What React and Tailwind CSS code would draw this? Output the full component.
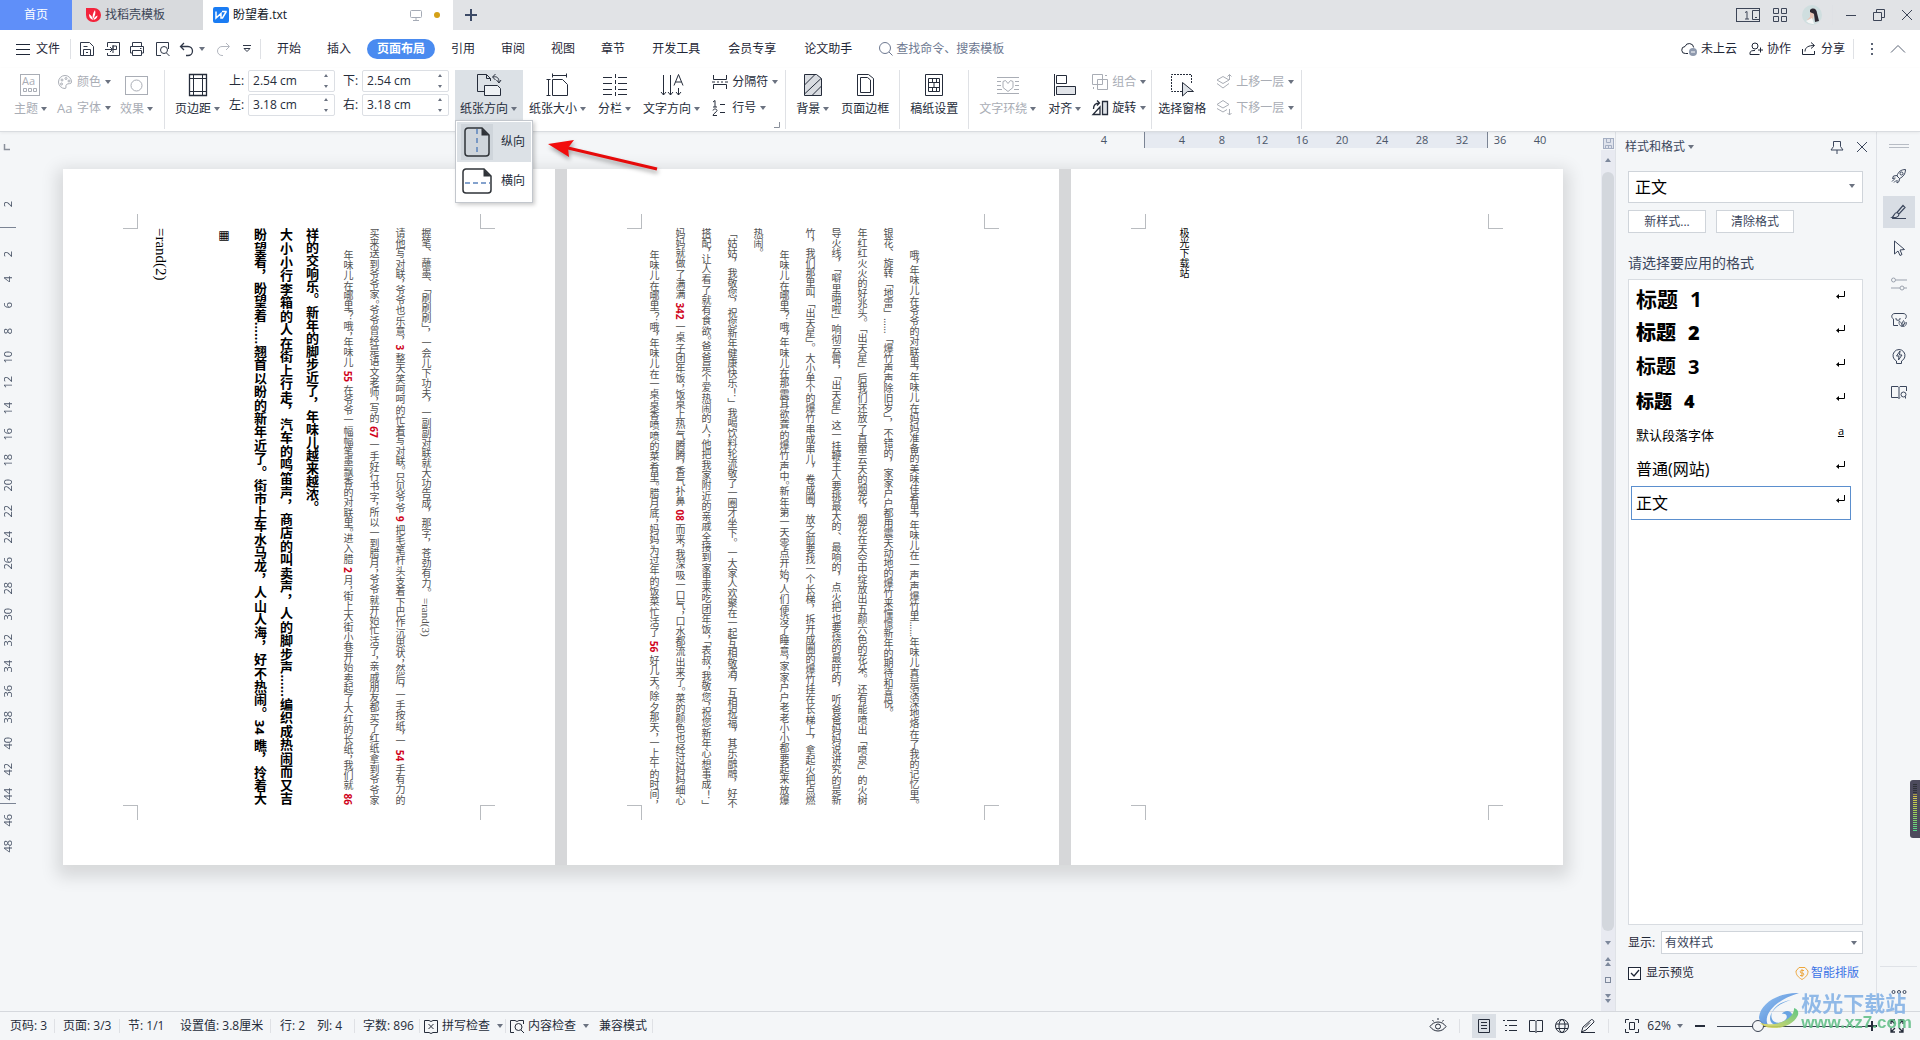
import React, { useState } from 'react'
import clsx from 'clsx'

/* ---------- small helpers ---------- */

function Svg({ w = 16, h = w, className, children }) {
  return (
    <svg
      width={w}
      height={h}
      viewBox={`0 0 ${w} ${h}`}
      fill="none"
      stroke="currentColor"
      strokeWidth="1"
      className={clsx('shrink-0 overflow-visible', className)}
      aria-hidden="true"
    >
      {children}
    </svg>
  )
}

function Caret({ className }) {
  return (
    <Svg w={6} h={4} className={clsx('text-[#6b7280]', className)}>
      <path d="M0 0h6L3 4z" fill="currentColor" stroke="none" />
    </Svg>
  )
}

function Divider({ className }) {
  return <span className={clsx('w-px shrink-0 bg-[#dfe1e5]', className)} />
}

/* ---------- title bar ---------- */

function TitleBar() {
  return (
    <header className="flex h-[30px] shrink-0 items-stretch bg-[#e1e3e6] text-[#3c4557]">
      <button className="w-[72px] bg-[#5f8ff9] text-white">首页</button>
      <button className="flex w-[131px] items-center gap-1 bg-[#d8dadd] pl-[13px]">
        <Svg w={16}>
          <path d="M1 1h8a7 7 0 0 1 0 14H8a7 7 0 0 1-7-7z" fill="#f3243c" stroke="none" />
          <path d="M8 13c-3-1-4-3-4-6 2 1 3.500 3 4 6zM8 12c-1-3 0-6 2-9 1 3 0 6-2 9zM8.500 13c0-2 2-4 4-4.500 0 2-1.500 4-4 4.500z" fill="#fff" stroke="none" />
        </Svg>
        找稻壳模板
      </button>
      <div className="flex w-[250px] items-center gap-1 bg-white pl-[10px] pr-[13px] text-[#111827]">
        <Svg w={16}>
          <rect width="16" height="16" rx="2" fill="#1a7cf3" stroke="none" />
          <path d="M3 4.500V11l5-4.500V11h1.500L13 5V4.500H9" stroke="#fff" strokeWidth="1.500" />
        </Svg>
        <span className="grow">盼望着.txt</span>
        <Svg w={12} className="mr-2 text-[#a5abb6]">
          <rect x=".5" y="1.500" width="11" height="7" rx="1" />
          <path d="M6 8.500v3M3 11.500h6" />
        </Svg>
        <span className="size-[6px] rounded-full bg-[#d4a017]" />
      </div>
      <button className="px-3" aria-label="新建">
        <Svg w={12} className="text-[#3c4a66]">
          <path d="M6 0v12M0 6h12" strokeWidth="2" />
        </Svg>
      </button>
      <div className="ml-auto flex items-center pr-[7px]">
        <Svg w={24} h={14}>
          <rect x=".5" y=".5" width="23" height="13" />
          <path d="M23 2.500h-6.500v9H23M19 9.500h2M9 4.500l2-1v7.500M9 11h4" />
        </Svg>
        <Svg w={14} className="ml-[13px]">
          <path d="M.5.5h5v5h-5zM8.500.5h5v5h-5zM.5 8.500h5v5h-5zM8.500 8.500h5v5h-5z" />
        </Svg>
        <Svg w={20} className="ml-[15px]">
          <circle cx="10" cy="10" r="10" fill="#cfdedf" stroke="none" />
          <path d="M8 5c3-3 7-1 7 3l2 8-4 1-1-8-4-1z" fill="#2d2730" stroke="none" />
          <path d="M8 7l4 2-1 5-5 3-1-2 3-3z" fill="#e7c3b4" stroke="none" />
          <path d="M4 16l6-3 2 6a9 9 0 0 1-8-3z" fill="#f4f6f6" stroke="none" />
        </Svg>
        <Divider className="ml-[10px] h-5 bg-[#c6cad0]" />
        <button className="ml-3 flex size-3 items-center" aria-label="最小化">
          <Svg w={12}><path d="M1 6.500h10" /></Svg>
        </button>
        <button className="ml-4" aria-label="还原">
          <Svg w={12}><path d="M.5 3.500h8v8h-8zM3.500 3V.5h8v8H9" /></Svg>
        </button>
        <button className="ml-4" aria-label="关闭">
          <Svg w={12}><path d="M1 1l10 10M11 1L1 11" /></Svg>
        </button>
      </div>
    </header>
  )
}

/* ---------- menu row ---------- */

const TABS = ['开始', '插入', '页面布局', '引用', '审阅', '视图', '章节', '开发工具', '会员专享', '论文助手']

function MenuRow() {
  const [active, setActive] = useState('页面布局')
  return (
    <nav className="flex h-[38px] shrink-0 items-center bg-white text-[#1f2737]">
      <button className="ml-4 flex items-center gap-[6px] text-[#1f2737]">
        <Svg w={14}><path d="M0 2.500h14M0 7.500h14M0 12.500h14" /></Svg>
        文件
      </button>
      <Divider className="ml-[10px] h-5" />
      <div className="flex items-center pl-2 text-[#303848]">
        <button aria-label="保存">
          <Svg w={16}><path d="M1.500 1.500h9l4 4v9h-13zM4.500 14V8.500h7V14M4.500 5.500h4M7 11.500h2" /></Svg>
        </button>
        <button className="ml-[10px]" aria-label="输出为PDF">
          <Svg w={16}><path d="M2.500 6V1.500h12v13h-12V12M0 8.500h7M5 6l2.500 2.500L5 11M8 5h3.500v3.500H8zM8 4v8" /></Svg>
        </button>
        <button className="ml-2" aria-label="打印">
          <Svg w={16}><path d="M3.500 5V1.500h9V5M3.500 12h-2V5.500h13V12h-2M3.500 9.500h9v5h-9zM11 7.500h1.500" /></Svg>
        </button>
        <button className="ml-[10px]" aria-label="打印预览">
          <Svg w={16}><path d="M6 14.500H1.500v-13h12V8M14.500 15l-3-3" /><circle cx="9" cy="9" r="3.500" /></Svg>
        </button>
        <button className="ml-2 flex items-center gap-1" aria-label="撤销">
          <Svg w={16}><path d="M5 2L1.500 5.500 5 9M2 5.500h7a4.500 4.500 0 0 1 0 9H7" strokeWidth="1.300" /></Svg>
          <Caret />
        </button>
        <button className="ml-[10px] text-[#b3b7bf]" aria-label="恢复">
          <Svg w={16}><path d="M11 2l3.500 3.500L11 9M14 5.500H7a4.500 4.500 0 0 0 0 9h1" /></Svg>
        </button>
        <button className="ml-3" aria-label="更多">
          <Svg w={8}><path d="M0 .5h8M1 3.500h6L4 6.500z" /></Svg>
        </button>
      </div>
      <Divider className="ml-[9px] mr-[3px] h-5" />
      {TABS.map((tab) => (
        <button
          key={tab}
          onClick={() => setActive(tab)}
          className={clsx(
            tab === active
              ? 'mx-[3px] h-5 rounded-full bg-[#4a8bf0] px-[10px] font-bold text-white'
              : tab.length > 2
                ? 'px-[14px]'
                : 'px-[13px]',
          )}
        >
          {tab}
        </button>
      ))}
      <label className="ml-3 flex items-center gap-[2px] text-[#6d7890]">
        <Svg w={16}><circle cx="7" cy="7" r="5.500" /><path d="M11 11l3.500 3.500" /></Svg>
        <input
          type="text"
          aria-label="查找命令、搜索模板"
          placeholder="查找命令、搜索模板"
          className="w-[120px] outline-none placeholder:text-[#6d7890]"
        />
      </label>
      <div className="ml-auto flex items-center pr-[14px]">
        <button className="flex items-center gap-1">
          <Svg w={16}>
            <path d="M7 12.500H4.500a3.500 3.500 0 0 1-.5-7 4.500 4.500 0 0 1 8.700 1" />
            <circle cx="12" cy="11" r="4" fill="#8e99ad" stroke="none" />
            <path d="M10 11h4" stroke="#fff" />
          </Svg>
          未上云
        </button>
        <button className="ml-3 flex items-center gap-1">
          <Svg w={14}>
            <circle cx="6" cy="4" r="3" />
            <path d="M1 12.500v-1.500C1 9 3 8.500 6 8.500M1 12.500h9.500M11.500 5.500v5M9 8h5" />
          </Svg>
          协作
        </button>
        <button className="ml-[10px] flex items-center gap-1">
          <Svg w={16}>
            <path d="M1.500 8v5.500h12V10M4 10.500C4 6 8 4.500 13 4.500M10 1.500l3.500 3-3.500 3" />
          </Svg>
          分享
        </button>
        <Divider className="ml-2 h-5" />
        <button className="ml-4 text-[#5b6475]" aria-label="更多选项">
          <Svg w={4} h={14}><path d="M1 1h2v2H1zM1 6h2v2H1zM1 11h2v2H1z" fill="currentColor" stroke="none" /></Svg>
        </button>
        <button className="ml-4 text-[#5b6475]" aria-label="折叠功能区">
          <Svg w={16}><path d="M1 11.500l7-7 7 7" /></Svg>
        </button>
      </div>
    </nav>
  )
}

/* ---------- ribbon ---------- */

function BigButton({ icon, label, caret, disabled, active }) {
  return (
    <button
      disabled={disabled}
      className={clsx(
        'flex h-[50px] shrink-0 flex-col items-center gap-1 px-[5px] pt-[3px]',
        active && 'bg-[#dce1e6]',
        disabled && 'text-[#a9adb5]',
      )}
    >
      <Svg w={24}>{icon}</Svg>
      <span className="flex items-center gap-[3px] whitespace-nowrap leading-4">
        {label}
        {caret && <Caret className="mr-px" />}
      </span>
    </button>
  )
}

function SmallButton({ icon, label, disabled }) {
  return (
    <button
      disabled={disabled}
      className={clsx('flex h-[26px] items-center gap-1 whitespace-nowrap', disabled && 'text-[#a9adb5]')}
    >
      <Svg w={16}>{icon}</Svg>
      {label}
      <Caret />
    </button>
  )
}

function MarginField({ id, label, value }) {
  return (
    <div className="flex h-[22px] items-center">
      <label htmlFor={id} className="w-[19px]">{label}:</label>
      <div className="flex h-[22px] w-[87px] items-center rounded-[2px] border border-[#dcdfe4] bg-white pr-[5px]">
        <input id={id} defaultValue={value} className="w-full min-w-0 grow pl-1 outline-none" />
        <Svg w={6} h={16} className="text-[#6b7280]">
          <path d="M1 4l2-3 2 3zM1 12l2 3 2-3z" fill="currentColor" stroke="none" />
        </Svg>
      </div>
    </div>
  )
}

function OrientationMenu() {
  return (
    <div className="absolute left-0 top-[50px] z-20 flex w-[78px] flex-col gap-px border border-[#c3c7cd] bg-white p-px pb-[3px] shadow-[2px_2px_4px_rgba(0,0,0,0.2)]">
      <button className="flex h-10 items-center bg-[#dce1e6] pl-1">
        <span className="flex h-9 w-8 items-center justify-center bg-[#cfd5db]">
          <Svg w={26} h={30}>
            <path d="M4 1h14l7 7v18a3 3 0 0 1-3 3H4a3 3 0 0 1-3-3V4a3 3 0 0 1 3-3z" stroke="#2f3338" strokeWidth="1.500" />
            <path d="M17.500 1v7.500H25z" fill="#2f3338" stroke="none" />
            <path d="M13 2v27" stroke="#5c84bd" strokeWidth="1.500" strokeDasharray="5 4" />
          </Svg>
        </span>
        <span className="ml-2">纵向</span>
      </button>
      <button className="flex h-9 items-center pl-1">
        <span className="flex w-8 items-center justify-center">
          <Svg w={30} h={26}>
            <path d="M4 1h18l7 7v14a3 3 0 0 1-3 3H4a3 3 0 0 1-3-3V4a3 3 0 0 1 3-3z" stroke="#2f3338" strokeWidth="1.500" />
            <path d="M21.500 1v7.500H29z" fill="#2f3338" stroke="none" />
            <path d="M3 15h25" stroke="#5c84bd" strokeWidth="1.500" strokeDasharray="5 3" />
          </Svg>
        </span>
        <span className="ml-2">横向</span>
      </button>
    </div>
  )
}

function Ribbon() {
  const sep = 'mx-1 mb-[2px]'
  return (
    <section className="relative z-10 flex h-16 shrink-0 gap-px border-b border-[#d9dce0] bg-white pl-[9px] pt-[2px] text-[#252c3a] shadow-[0_1px_3px_rgba(0,0,0,0.06)]">
      <BigButton
        disabled
        caret
        label="主题"
        icon={
          <>
            <rect x="1.500" y="1.500" width="19" height="21" />
            <text x="3" y="12" fontSize="11" fill="currentColor" stroke="none">Aa</text>
            <path d="M4.500 15.500h3v3h-3zM9.500 15.500h3v3h-3zM14.500 15.500h3v3h-3z" />
          </>
        }
      />
      <div className="-mt-px ml-[3px]">
        <SmallButton
          disabled
          label="颜色"
          icon={
            <>
              <path d="M8 1.500a6.500 6.500 0 1 0 0 13c2 0 0-2.500 1.500-4s5 0 5-2.500a6.500 6.500 0 0 0-6.500-6.500z" />
              <circle cx="5" cy="6" r="1" /><circle cx="9" cy="4.500" r="1" /><circle cx="4.500" cy="10" r="1" /><circle cx="12" cy="7" r="1" />
            </>
          }
        />
        <SmallButton
          disabled
          label="字体"
          icon={<text x="0" y="13" fontSize="13" fill="currentColor" stroke="none">Aa</text>}
        />
      </div>
      <div className="ml-[3px]">
        <BigButton
          disabled
          caret
          label="效果"
          icon={
            <>
              <rect x=".5" y="3.500" width="22" height="18" />
              <circle cx="11.500" cy="12.500" r="5.500" />
            </>
          }
        />
      </div>
      <Divider className={sep} />
      <BigButton
        caret
        label="页边距"
        icon={
          <>
            <path d="M3.500 1.500h17v21h-17z" strokeWidth="1.300" />
            <path d="M7.500 1v22M16.500 1v22M3 5.500h18M3 18.500h18" />
          </>
        }
      />
      <div className="ml-[2px] flex flex-col gap-[2px]">
        <MarginField id="m-top" label="上" value="2.54 cm" />
        <MarginField id="m-left" label="左" value="3.18 cm" />
      </div>
      <div className="ml-[7px] mr-[5px] flex flex-col gap-[2px]">
        <MarginField id="m-bottom" label="下" value="2.54 cm" />
        <MarginField id="m-right" label="右" value="3.18 cm" />
      </div>
      <div className="relative">
        <BigButton
          active
          caret
          label="纸张方向"
          icon={
            <>
              <path d="M7 18.500H.5v-17h9l4 4V8M9.500 1.500v4h4" />
              <path d="M7.500 12.500h13l3 3v7h-16z" fill="#eef1f4" />
              <path d="M16 4c4-1 6 1 6 5M18.500 1L15.500 4l3 3M19.500 7l2.500 3 2-3" />
            </>
          }
        />
        <OrientationMenu />
      </div>
      <BigButton
        caret
        label="纸张大小"
        icon={<path d="M6.500 6.500h10l5 5v11h-15zM6 2.500h15M6.500.5v4M20.500.5v4M2.500 7v15M.5 6.500h4M.5 22.500h4" />}
      />
      <BigButton
        caret
        label="分栏"
        icon={
          <>
            <path d="M0 4.500h9M0 10.500h9M0 16.500h9M0 21.500h9M15 4.500h9M15 10.500h9M15 16.500h9M15 21.500h9" />
            <path d="M12.500 1v22" strokeDasharray="4 2" />
          </>
        }
      />
      <BigButton
        caret
        label="文字方向"
        icon={<path d="M3.500 2v20M1 19l2.500 3L6 19M10.500 2v20M8 19l2.500 3 2.500-3M18.500 15v7M16 19l2.500 3 2.500-3M14 12.500l4.500-11 4.500 11M15.500 9h6" />}
      />
      <div className="-mt-px ml-[5px]">
        <SmallButton label="分隔符" icon={<path d="M1.500 1v4.500h13V1M1.500 15v-4.500h13V15M0 8h3M5 8h2M9 8h2M13 8h3" />} />
        <SmallButton
          label="行号"
          icon={
            <path d="M1 2l2-1.500V7M1 7h4M1 10.500c0-2 4-2 4 0 0 1.500-4 3-4 5h4M8 4.500h5M8 12.500h5" />
          }
        />
      </div>
      <Svg w={6} className="-ml-[5px] mt-[52px] text-[#8a909b]"><path d="M0 5.500h5.500V0" /></Svg>
      <Divider className={sep} />
      <BigButton
        caret
        label="背景"
        icon={
          <>
            <path d="M3.500 1.500h12l5 4v17h-17z" fill="#d9dce1" />
            <path d="M3.500 12l10-10M3.500 21L20 5.500M11 22.500l9.500-9.500" />
          </>
        }
      />
      <BigButton label="页面边框" icon={<path d="M4.500 1.500h11l5 4v17h-16zM7.500 4.500h7l3 2.500v12.500h-10z" />} />
      <Divider className={sep} />
      <BigButton
        label="稿纸设置"
        icon={<path d="M3.500 1.500h17v21h-17zM6.500 5.500h11v13h-11zM6.500 9.500h11M6.500 14.500h11M10.500 5.500v4M14.500 5.500v4M10.500 14.500v4M14.500 14.500v4M12 9.500v5" />}
      />
      <Divider className={sep} />
      <BigButton
        disabled
        caret
        label="文字环绕"
        icon={<path d="M1 4.500h22M1 20.500h22M1 8.500h4M1 12.500h4M1 16.500h5M19 8.500h4M19 12.500h4M18 16.500h5M12 18.500l-5-4v-6l2.500-1 2.500 3 2.500-3 2.500 1v6z" />}
      />
      <BigButton
        caret
        label="对齐"
        icon={
          <>
            <path d="M1.500 1v22M3.500 2.500h10v8h-10z" />
            <path d="M3.500 13.500h19v8h-19z" fill="#e1e4e9" />
          </>
        }
      />
      <div className="-mt-px ml-1">
        <SmallButton
          disabled
          label="组合"
          icon={<path d="M.5.5h10v10H.5zM5.500 5.500h10v10h-10zM13 1.500h2M1.500 13v2" />}
        />
        <SmallButton
          label="旋转"
          icon={
            <>
              <path d="M10.500 1.500h5v13h-5z" fill="#dfe3e8" strokeWidth="1.300" />
              <path d="M8 7L1 14.500h7zM1.500 9c0-4 2-6 6-6M5 .5L7.500 3 5 5.500" strokeWidth="1.300" />
            </>
          }
        />
      </div>
      <Divider className="mb-[2px] ml-1" />
      <BigButton
        label="选择窗格"
        icon={
          <>
            <path d="M12 18.500H1.500v-17h20V10" strokeDasharray="2 1" />
            <path d="M12.500 9.500l11 9h-6l-5 4.500z" fill="#dfe3e8" />
          </>
        }
      />
      <div className="-mt-px ml-1">
        <SmallButton
          disabled
          label="上移一层"
          icon={<path d="M7 2.500l-6 3.500 6 3.500 6-3.500zM1 9.500L7 14l6-4.500M13.500 6V.5M11.500 2.500l2-2 2 2" />}
        />
        <SmallButton
          disabled
          label="下移一层"
          icon={<path d="M7 .5L1 4.500 7 8l6-3.500zM1 8.500L7 12l4-2.500M13.500 9v6M11.500 13l2 2 2-2" />}
        />
      </div>
      <Divider className="mb-[2px] ml-[6px]" />
    </section>
  )
}

/* ---------- document ---------- */

const Red = ({ children }) => <b className="font-bold text-[#d0021b]"> {children} </b>

// kind: bold | thin; full lines are justified to the text frame
function Line({ kind = 'thin', full, indent, tight, children }) {
  return (
    <p
      className={clsx(
        'h-[577px] whitespace-nowrap leading-[26px]',
        kind === 'bold' ? 'text-[13px] font-bold text-black' : 'text-[10px] text-[#505050]',
        full && '[text-align-last:justify]',
        indent && 'pt-[22px]',
        tight && '[font-feature-settings:"vhal"]',
      )}
    >
      {children}
    </p>
  )
}

function Page({ children }) {
  const mark = 'absolute size-[15px] border-[#b9bcc0]'
  return (
    <article className="relative h-[696px] w-[492px] shrink-0 bg-white">
      <span className={clsx(mark, 'left-[60px] top-[45px] border-b border-r')} />
      <span className={clsx(mark, 'right-[60px] top-[45px] border-b border-l')} />
      <span className={clsx(mark, 'bottom-[45px] left-[60px] border-r border-t')} />
      <span className={clsx(mark, 'bottom-[45px] right-[60px] border-l border-t')} />
      <div className="h-full pt-[59px] [writing-mode:vertical-lr]">{children}</div>
    </article>
  )
}

function PageOne() {
  return (
    <Page>
      <p className="ml-[85px] font-['Liberation_Serif'] text-[15px] leading-[26px] text-black">=rand(2)</p>
      <p className="ml-[37px] font-['DejaVu_Sans'] text-[12px] leading-[26px] text-black">▦</p>
      <div className="ml-[10px]">
        <Line kind="bold" full>盼望着，盼望着……翘首以盼的新年近了。街市上车水马龙，人山人海，好不热闹。34 瞧，拎着大</Line>
        <Line kind="bold" full>大小小行李箱的人在街上行走，汽车的鸣笛声，商店的叫卖声，人的脚步声……编织成热闹而又吉</Line>
        <Line kind="bold">祥的交响乐。新年的脚步近了，年味儿越来越浓。</Line>
      </div>
      <div className="ml-[10px]">
        <Line full indent tight>
          年味儿在哪里？哦，年味儿<Red>55</Red>在爷爷一幅幅笔墨飘香的对联里。进入腊<Red>2</Red>月，街上大街小巷开始卖起了大红的长纸，我们就<Red>86</Red>
        </Line>
        <Line full tight>
          买来送到爷爷家。爷爷曾经是语文老师，写的<Red>67</Red>一手好行书字，所以一到腊月，爷爷就开始忙活了，亲戚朋友都买了红纸拿到爷爷家
        </Line>
        <Line full tight>
          请他写对联，爷爷也乐意，<Red>3</Red>整天笑呵呵的忙着写对联。只见爷爷<Red>9</Red>把毛笔杆头支着下巴作沉思状，然后，一手按纸，一<Red>54</Red>手有力的
        </Line>
        <Line>
          握笔、蘸墨、「刷刷刷」，一会儿下功夫，一副副对联就大功告成，那字，苍劲有力。<span className="font-['Liberation_Serif'] text-[11px]">=rand(3)</span>
        </Line>
      </div>
    </Page>
  )
}

function PageTwo() {
  return (
    <Page>
      <div className="ml-[74px]">
        <Line full indent tight>年味儿在哪里？哦，年味儿在一桌桌香喷喷的菜肴里。腊月底，妈妈为过年的饭菜忙活了<Red>56</Red>好几天。除夕那天，一上午的时间，</Line>
        <Line full tight>妈妈就做了满满<Red>342</Red>一桌子团年饭，饭桌上热气腾腾，香气扑鼻<Red>08</Red>而来，我深吸一口气，口水都流出来了。菜的颜色也经过妈妈细心</Line>
        <Line full tight>搭配，让人看了就有食欲。爸爸是个爱热闹的人，他把我家附近的亲戚全接到家里来吃团年饭，「表叔，我敬您，祝您新年心想事成！」</Line>
        <Line full>「姑姑，我敬您，祝您新年健康快乐！」我喝饮料轮流敬了一圈才坐下。一大家人欢聚在一起互相敬酒，互相祝福，其乐融融，好不</Line>
        <Line>热闹。</Line>
        <Line full indent tight>年味儿在哪里？哦，年味儿在那震耳欲聋的爆竹声中。新年第一天零点开始，人们便没了睡意，家家户户老老小小都要起来放爆</Line>
        <Line full>竹，我们那里叫「出天星」。大小单个的爆竹串成串儿，卷成圈，放之前要找一个长梯，拆开成圈的爆竹挂在长梯上，拿起火把点燃</Line>
        <Line full>导火线，「噼里啪啦」响彻云霄，「出天星」这一挂鞭主人要挑最大的、最响的，点火把也要烧的最旺的，听爸爸妈妈说讲究的是新</Line>
        <Line full>年红红火火的好兆头。「出天星」后我们还放了直窜云天的烟花，烟花在天空中绽放出五颜六色的花朵。还有能喷出「喷泉」的火树</Line>
        <Line>银花、旋转「地雷」……「爆竹声声除旧岁」，不错的，家家户户都用震天动地的爆竹来憧憬新年的期待和喜悦。</Line>
        <Line full indent tight>哦，年味儿在爷爷的对联里，年味儿在妈妈准备的美味佳肴里，年味儿在一声声爆竹里……年味儿真是深深地烙在了我的记忆里。</Line>
      </div>
    </Page>
  )
}

function HorizontalRuler() {
  const cell = 'shrink-0 text-center'
  return (
    <div className="flex h-4 pl-[1084px] text-[11px] leading-[15px] text-[#4a5568]">
      <span className={clsx(cell, 'w-10')}>4</span>
      <div className="ml-5 flex h-4 w-[344px] shrink-0 border-x border-[#7b8494] bg-[#e6eaf1] pl-[17px]">
        {[4, 8, 12, 16, 20, 24, 28, 32].map((n) => (
          <span key={n} className={clsx(cell, 'w-10')}>{n}</span>
        ))}
      </div>
      <span className={clsx(cell, 'w-6')}>36</span>
      <span className={clsx(cell, 'ml-2 w-10')}>40</span>
    </div>
  )
}

const V_MARKS = Array.from({ length: 24 }, (_, i) => (i + 1) * 2)

function VerticalRuler() {
  const num = 'flex items-center justify-center'
  const digits = 'rotate-180 [writing-mode:vertical-rl] leading-4'
  return (
    <div className="flex w-4 shrink-0 flex-col text-[11px] text-[#4a5568]">
      <div className={clsx(num, 'mt-[43px] h-[26px]')}><span className={digits}>2</span></div>
      <span className="mt-[10px] h-px bg-[#7b8494]" />
      <div className="mt-[13px] flex h-[618px] flex-col">
        {V_MARKS.map((n) => (
          <div key={n} className={clsx(num, 'relative grow basis-0')}>
            <span className={digits}>{n}</span>
            {n === 44 && <span className="absolute inset-x-0 bottom-1 h-px bg-[#7b8494]" />}
          </div>
        ))}
      </div>
    </div>
  )
}

function DocumentPane() {
  return (
    <main className="relative flex min-w-0 grow flex-col overflow-hidden bg-[#f4f6f8]">
      <HorizontalRuler />
      <Svg w={6} className="absolute left-1 top-3 text-[#8a909b]"><path d="M.5 0v5.500H6" strokeWidth="1.500" /></Svg>
      <div className="flex">
        <VerticalRuler />
        <div className="ml-[47px] mt-[21px] flex h-fit shrink-0 gap-3 bg-[#d6d7d9] shadow-[0_6px_16px_6px_rgba(0,0,0,0.12)]">
          <PageOne />
          <PageTwo />
          <Page>
            <p className="ml-[100px] text-[10px] leading-[26px] text-black">极光下载站</p>
          </Page>
        </div>
      </div>
    </main>
  )
}

/* ---------- scrollbar, style panel, side tools ---------- */

function ScrollBar() {
  return (
    <div className="flex w-[15px] shrink-0 flex-col items-center border-r border-[#dfe2e7] bg-[#e8eaf1] text-[#7d889c]">
      <div className="flex h-[18px] w-full items-end justify-center bg-[#f4f6f8] pb-px">
        <Svg w={11}>
          <rect x=".5" y=".5" width="10" height="10" fill="#dfe3ec" stroke="#a4aec2" />
          <path d="M3.500 1v3.500h4V1M2.500 10V7.500h6V10M5.500 7.500V10" stroke="#a4aec2" />
        </Svg>
      </div>
      <Svg w={8} h={20}><path d="M1 12l3-4 3 4z" fill="currentColor" stroke="none" /></Svg>
      <span className="my-[2px] w-3 grow rounded-full bg-[#d3d7dd]" />
      <Svg w={8} h={20}><path d="M1 8l3 4 3-4z" fill="currentColor" stroke="none" /></Svg>
      <Svg w={8} h={20}><path d="M1 8l3-4 3 4zM1 13l3-4 3 4z" fill="currentColor" stroke="none" /></Svg>
      <Svg w={8} h={14}><rect x="1.500" y="4.500" width="5" height="5" /></Svg>
      <Svg w={8} h={24}><path d="M1 7l3 4 3-4zM1 12l3 4 3-4z" fill="currentColor" stroke="none" /></Svg>
    </div>
  )
}

const STYLES = [
  { name: '标题', num: '1', cls: 'text-[21px] font-bold' },
  { name: '标题', num: '2', cls: 'text-[20px] font-black' },
  { name: '标题', num: '3', cls: 'text-[20px] font-bold' },
  { name: '标题', num: '4', cls: 'text-[18px] font-black' },
  { name: '默认段落字体', cls: 'text-[13px]', char: true },
  { name: '普通(网站)', cls: 'text-[16px]' },
  { name: '正文', cls: 'text-[16px]', selected: true },
]

function StylePanel() {
  return (
    <aside className="flex w-[260px] shrink-0 flex-col bg-[#f4f6f8] pl-3 pr-[13px] text-[#3b465c]">
      <div className="-mr-[5px] flex h-[30px] items-center">
        <span className="-ml-[3px] mr-[3px]">样式和格式</span>
        <Caret />
        <button className="ml-auto" aria-label="固定">
          <Svg w={14}><path d="M3.500 1.500h7v5l2.500 3.500H1L3.500 6.500zM7 10v4" /></Svg>
        </button>
        <button className="ml-3" aria-label="关闭窗格">
          <Svg w={12}><path d="M1 1l10 10M11 1L1 11" /></Svg>
        </button>
      </div>
      <div className="relative mt-[9px]">
        <select aria-label="当前样式" className="h-8 w-full appearance-none border border-[#cfd4da] bg-white pl-[6px] text-[16px] text-black outline-none">
          <option>正文</option>
        </select>
        <Caret className="absolute right-2 top-[13px]" />
      </div>
      <div className="mt-[7px] flex gap-[10px]">
        <button className="h-[23px] w-[78px] border border-[#cfd4da] bg-white">新样式...</button>
        <button className="h-[23px] w-[78px] border border-[#cfd4da] bg-white">清除格式</button>
      </div>
      <h2 className="mb-[6px] mt-5 text-[14px] leading-5">请选择要应用的格式</h2>
      <ul className="flex grow flex-col border border-[#d8dce1] bg-white py-[2px] pl-[2px] pr-[11px] text-black">
        {STYLES.map((s, i) => (
          <li key={i}>
            <button
              className={clsx(
                'flex h-[34px] w-full items-center justify-between border pl-1 pr-[5px]',
                s.selected ? 'border-[#5b8fce]' : 'border-transparent',
              )}
            >
              <span className={clsx('flex gap-3 leading-6', s.cls)}>
                <span>{s.name}</span>
                {s.num && <span>{s.num}</span>}
              </span>
              {s.char ? (
                <span className="mb-2 mr-px text-[11px] leading-3 underline">a</span>
              ) : (
                <Svg w={10} className="mb-2">
                  <path d="M9.500 1v5.500H3" />
                  <path d="M1 6.500L4 4v5z" fill="currentColor" stroke="none" />
                </Svg>
              )}
            </button>
          </li>
        ))}
      </ul>
      <div className="mt-[6px] flex items-center">
        <label htmlFor="show" className="w-[33px] text-[#1f2737]">显示:</label>
        <div className="relative grow">
          <select id="show" className="h-[23px] w-full appearance-none border border-[#cfd4da] bg-white pl-[3px] outline-none">
            <option>有效样式</option>
          </select>
          <Caret className="absolute right-[6px] top-[10px]" />
        </div>
      </div>
      <div className="mb-[28px] mt-[9px] flex h-5 items-center justify-between pr-1">
        <label className="flex items-center gap-[5px] text-[#1f2737]">
          <span className="relative size-[13px]">
            <input type="checkbox" defaultChecked className="peer block size-[13px] appearance-none border border-[#1f2737] bg-white" />
            <Svg w={13} className="pointer-events-none absolute inset-0 opacity-0 peer-checked:opacity-100"><path d="M3 6l3 3 5-6" strokeWidth="1.300" /></Svg>
          </span>
          显示预览
        </label>
        <a href="#layout" className="flex items-center gap-[2px] text-[#3b73e6]">
          <Svg w={14} className="text-[#eda63c]">
            <path d="M4 1.500h6l3 3.500c0 4-2 6-6 8.500C3 11 1 9 1 5z" />
            <path d="M9 4.500H6.500a1.200 1.200 0 0 0 0 2.500h1a1.200 1.200 0 0 1 0 2.500H5M7 3v8" />
          </Svg>
          智能排版
        </a>
      </div>
    </aside>
  )
}

const TOOLS = [
  { label: '快捷', icon: <><path d="M6 8c1-4 4-6.500 8.500-6.500C14.500 6 12 9 8.500 10.500zM6 7.500L2.500 8l-1 2.500 3-.5M8.500 10.500L8 13.500l-2 1.500V12M3.500 11L1 13.500M5 12.500L3 14.500" /><circle cx="10.500" cy="5.500" r="1.500" /></> },
  { label: '样式', active: true, icon: <path d="M1 14.500h14M6 8.500l6-7 2 2-6 6.500zM6 8.500c-3 0-3 4-5 5 3 .5 7 0 7-3.500" strokeWidth="1.200" /> },
  { label: '选择', icon: <path d="M3.500 1l10 8.500-4.500.5 2 4.500-2 1-2-4.500-3.500 3z" /> },
  { label: '属性', muted: true, icon: <><circle cx="2.500" cy="4" r="2" /><path d="M5 4h11M0 12h9M13 12h3" /><circle cx="11" cy="12" r="2" /></> },
  { label: '素材', icon: <><path d="M2.500 13.500V7C0 6 0 1.500 4 1.500h8c4 0 4 4 2 5.500M2.500 13.500H7M5 6v1.500M9 6v1.500M5 7.500c1 1 3 1 4 0" /><path d="M11 14.500c-3-1-3-3-3-5 2 0 3 2 3 5zM11.500 14.500c-1-2 0-5 1-6 1.500 2 1 4-1 6zM12 14.500c0-2 1.500-3.500 3.500-4 0 2-1 4-3.500 4z" strokeWidth=".8" /></> },
  { label: '智能', icon: <path d="M5.500 13a6 6 0 1 1 5 0v2.500h-5zM9 3L5.500 8H8l-.5 4L11 7H8.500z" /> },
  { label: '查阅', icon: <><path d="M8 3.500L7 2.500H.5v11H7l1 1 1-1M8 3.500v11M8 3.500l1-1h6.500V7" /><circle cx="12.500" cy="10.500" r="2.500" /><path d="M14.500 12.500v2" /></> },
]

function SideTools() {
  return (
    <div className="relative flex w-11 shrink-0 flex-col items-center border-l border-[#dfe2e7] bg-[#f4f6f8] text-[#3b465c]">
      <Svg w={20} h={4} className="mb-3 mt-3 text-[#b7bcc4]"><path d="M0 .5h20M0 3.500h20" /></Svg>
      <div className="flex flex-col gap-1">
        {TOOLS.map((t) => (
          <button
            key={t.label}
            aria-label={t.label}
            className={clsx(
              'flex size-8 items-center justify-center',
              t.active && 'bg-[#d8dde4]',
              t.muted && 'text-[#9aa1ad]',
            )}
          >
            <Svg w={16}>{t.icon}</Svg>
          </button>
        ))}
      </div>
      {/* volume meter docked to the screen edge */}
      <div className="absolute right-0 top-[648px] h-[58px] w-[10px] rounded-l-[3px] bg-[#4c4a5c] p-[3px] pb-[6px]">
        <div className="h-full w-full bg-[repeating-linear-gradient(to_bottom,#4c4a5c_0_1px,transparent_1px_2px),linear-gradient(to_bottom,#2e3138_20%,#d8c64a_25%,#a6d052_55%,#4fd68a_100%)]" />
      </div>
      <span className="mt-auto mb-[22px] h-px w-[37px] bg-[#dfe2e7]" />
      <Svg w={16} h={6} className="mb-4"><circle cx="2.500" cy="3" r="1.500" /><circle cx="8" cy="3" r="1.500" /><circle cx="13.500" cy="3" r="1.500" /></Svg>
    </div>
  )
}

/* ---------- status bar ---------- */

function StatusBar() {
  const div = 'h-[14px]'
  return (
    <footer className="flex h-[29px] shrink-0 items-center border-t border-[#d5d8dd] bg-[#f4f6f8] pl-[10px] pr-4 text-[#252c3a]">
      <span className="w-11">页码: 3</span>
      <Divider className={div} />
      <span className="w-16 pl-2">页面: 3/3</span>
      <Divider className={div} />
      <span className="w-[60px] pl-2">节: 1/1</span>
      <span className="w-[90px]">设置值: 3.8厘米</span>
      <Divider className={div} />
      <span className="w-[46px] pl-[9px]">行: 2</span>
      <span className="w-[37px]">列: 4</span>
      <Divider className={div} />
      <span className="w-16 pl-2">字数: 896</span>
      <Divider className={div} />
      <button className="ml-[3px] flex w-[82px] items-center gap-[3px]">
        <Svg w={16}><path d="M6 2.500H1.500v12H6l2 1 2-1h4.500v-12H10l-2 1zM5.500 6l5 5M10.500 6l-5 5" /></Svg>
        拼写检查
        <Caret className="ml-1" />
      </button>
      <Divider className={div} />
      <button className="ml-[3px] flex w-[86px] items-center gap-[3px]">
        <Svg w={16}><path d="M5 14.500H1.500v-12H6l2 1 2-1h4.500V6M12 12l3 3" /><circle cx="9.500" cy="9" r="3.500" /></Svg>
        内容检查
        <Caret className="ml-1" />
      </button>
      <span className="ml-1 pr-[5px]">兼容模式</span>
      <Divider className={div} />

      <div className="ml-auto flex items-center">
        <button aria-label="护眼模式">
          <Svg w={18}><path d="M1 9.500c4-6 12-6 16 0-4 6-12 6-16 0zM9 1v2M3.500 3l1 1.500M14.500 3l-1 1.500" /><circle cx="9" cy="9.500" r="2.500" /></Svg>
        </button>
        <Divider className="mx-3 h-[14px]" />
        <div className="flex items-center gap-[2px]">
          <button aria-label="页面视图" className="flex size-6 items-center justify-center bg-[#dadfe5]">
            <Svg w={16}><path d="M2.500 1.500h11v13h-11zM5 4.500h6M5 7.500h6M5 10.500h6" /></Svg>
          </button>
          <button aria-label="大纲" className="flex size-6 items-center justify-center">
            <Svg w={16}><path d="M1 2.500h2M5 2.500h10M3 7.500h2M7 7.500h8M3 12.500h2M7 12.500h8" /></Svg>
          </button>
          <button aria-label="阅读版式" className="flex size-6 items-center justify-center">
            <Svg w={16}><path d="M8 3.500l-1-1H1.500v11H7l1 1 1-1h5.500v-11H9zM8 3.500v11" /></Svg>
          </button>
          <button aria-label="Web版式" className="flex size-6 items-center justify-center">
            <Svg w={16}><circle cx="8" cy="8" r="6.500" /><ellipse cx="8" cy="8" rx="3" ry="6.500" /><path d="M2 6h12M2 10.500h12" /></Svg>
          </button>
          <button aria-label="写作模式" className="flex size-6 items-center justify-center">
            <Svg w={16}><path d="M1 14.500h14M1.500 14l1.500-5 8.500-7.500c1.500 0 2.500 1.500 2.500 2.500L6 12zM10 4.500l-5 5" /></Svg>
          </button>
        </div>
        <Divider className="ml-2 mr-4 h-[14px]" />
        <button aria-label="适合页面">
          <Svg w={14}><path d="M.5 4V.5H4M10 .5h3.500V4M13.500 10v3.500H10M4 13.500H.5V10M4.500 3.500h5v7h-5z" /></Svg>
        </button>
        <button className="ml-2 flex items-center gap-[6px]">62% <Caret /></button>
        <button className="ml-3" aria-label="缩小">
          <Svg w={10}><path d="M0 5h10" strokeWidth="2" /></Svg>
        </button>
        <input
          type="range"
          aria-label="显示比例"
          min="0"
          max="100"
          defaultValue="25"
          className="ml-3 h-[14px] w-[150px] appearance-none bg-[linear-gradient(#3a4252,#3a4252)] bg-[length:100%_1px] bg-center bg-no-repeat [&::-webkit-slider-thumb]:size-3 [&::-webkit-slider-thumb]:appearance-none [&::-webkit-slider-thumb]:rounded-full [&::-webkit-slider-thumb]:border [&::-webkit-slider-thumb]:border-[#3a4252] [&::-webkit-slider-thumb]:bg-[#f4f6f8]"
        />
        <button aria-label="放大">
          <Svg w={10}><path d="M0 5h10M5 0v10" strokeWidth="2" /></Svg>
        </button>
        <button className="ml-[13px]" aria-label="全屏">
          <Svg w={14}><path d="M1 5V1h4M9 1h4v4M13 9v4H9M5 13H1V9M1 1l4 4M13 1L9 5M13 13L9 9M1 13l4-4" strokeWidth="1.300" /></Svg>
        </button>
      </div>
    </footer>
  )
}

/* ---------- overlays ---------- */

function RedArrow() {
  return (
    <svg width="116" height="34" viewBox="0 0 116 34" className="absolute left-[546px] top-[140px] z-20 overflow-visible drop-shadow-[1px_3px_2px_rgba(0,0,0,0.35)]" aria-hidden="true">
      <path d="M22 8L111 29" stroke="#e60a0a" strokeWidth="3" />
      <path d="M2 4L28 0l-6 8 1 9z" fill="#f20d0d" />
    </svg>
  )
}

function Watermark() {
  return (
    <div className="pointer-events-none absolute bottom-2 right-2 z-30 flex items-center opacity-90">
      <svg width="44" height="40" viewBox="0 0 44 40" aria-hidden="true">
        <defs>
          <linearGradient id="wm-b" x1="0" y1="0" x2="1" y2="1">
            <stop offset="0" stopColor="#8fc1f2" />
            <stop offset="1" stopColor="#2f6fd0" />
          </linearGradient>
          <linearGradient id="wm-g" x1="0" y1="1" x2="1" y2="0">
            <stop offset="0" stopColor="#e9d65a" />
            <stop offset="1" stopColor="#4fc27a" />
          </linearGradient>
        </defs>
        <path d="M42 1C24 0 4 10 2 25c0 5 4 8 9 8-5-8 4-24 31-32z" fill="url(#wm-b)" />
        <path d="M34 8C20 10 12 20 15 27c2 5 10 5 14 0 2-3 0-6-4-5 1-3 8-5 10 0 2 6-8 12-16 11C8 31 12 14 34 8z" fill="#5b9be0" />
        <path d="M3 31c8 9 32 6 38-8 1-4-1-6-4-7 1 10-16 20-34 15z" fill="url(#wm-g)" />
      </svg>
      <div className="flex flex-col font-bold">
        <span className="text-[21px] leading-[22px] text-[#86b3e6]">极光下载站</span>
        <span className="font-['Liberation_Sans'] text-[17px] leading-[18px] text-[#66c08a]">www.xz7.com</span>
      </div>
    </div>
  )
}

export default function App() {
  return (
    <div className="relative flex h-screen flex-col overflow-hidden bg-[#f4f6f8] font-['Open_Sans','Noto_Sans_CJK_SC',sans-serif] text-[12px] leading-4">
      <TitleBar />
      <MenuRow />
      <Ribbon />
      <div className="flex min-h-0 grow">
        <DocumentPane />
        <ScrollBar />
        <StylePanel />
        <SideTools />
      </div>
      <StatusBar />
      <RedArrow />
      <Watermark />
    </div>
  )
}
